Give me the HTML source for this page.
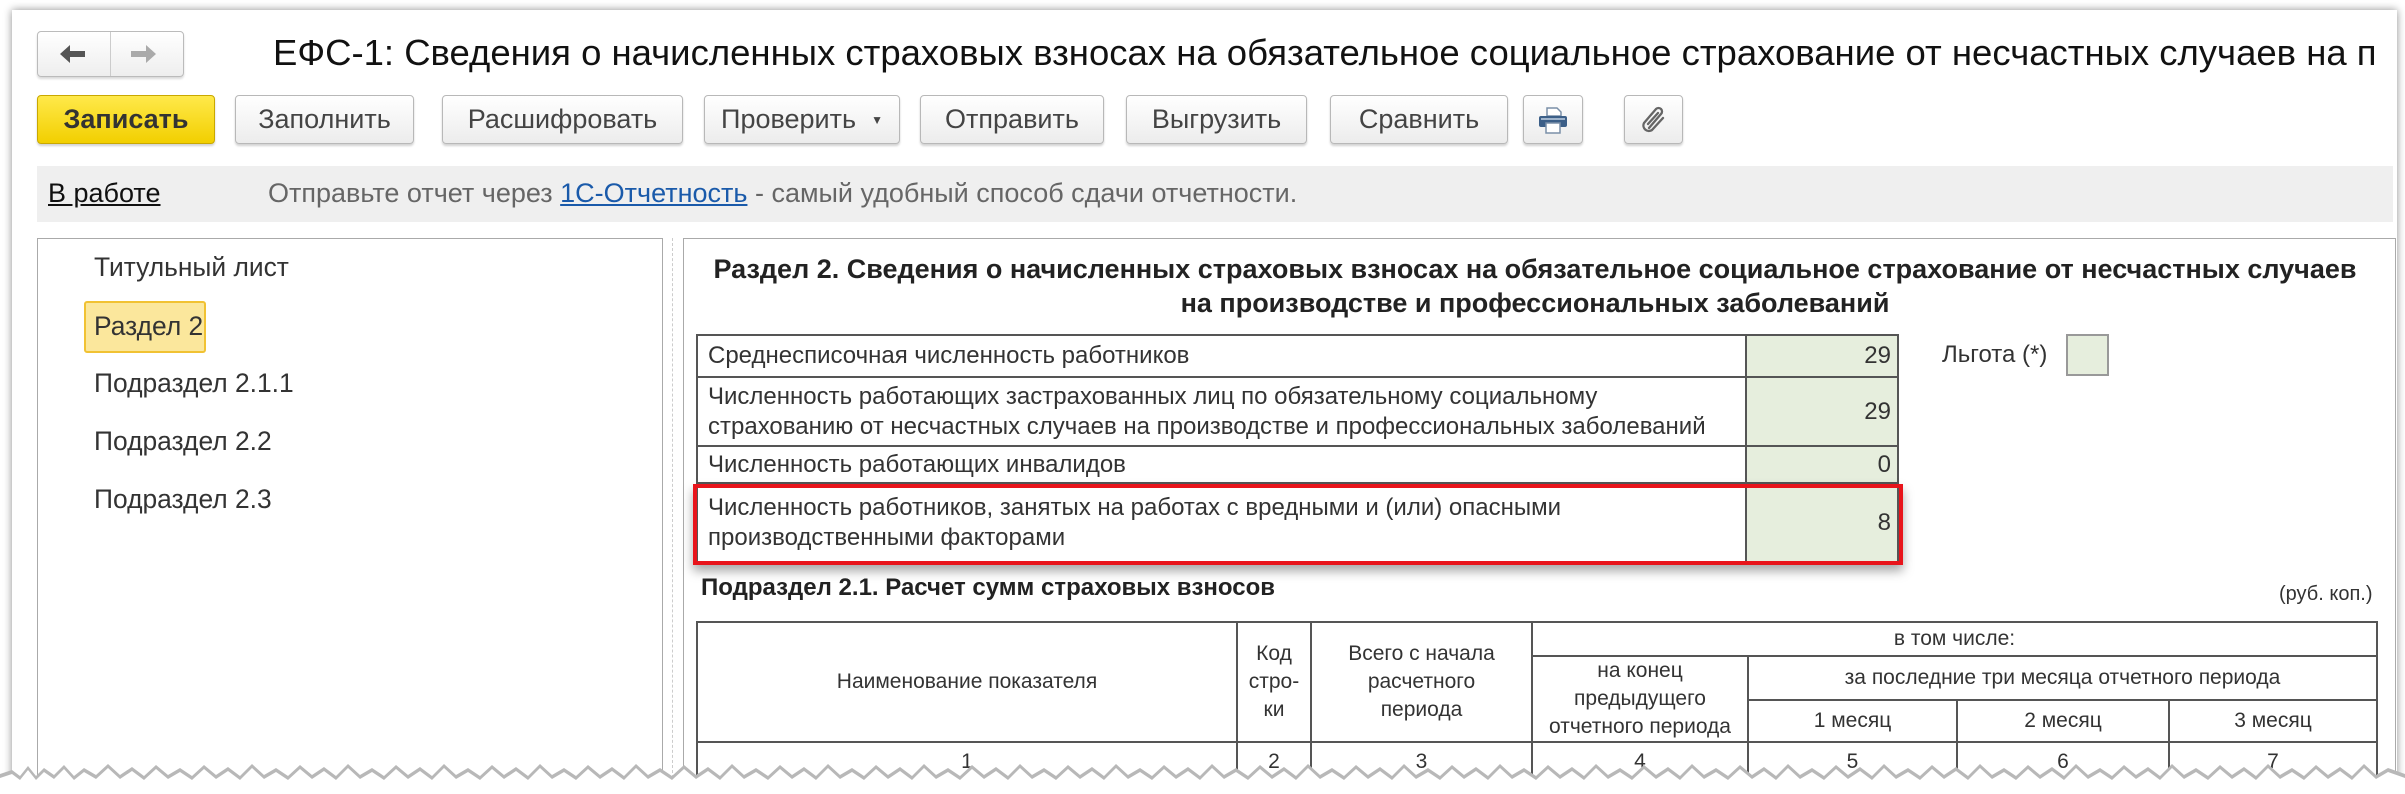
<!DOCTYPE html>
<html><head><meta charset="utf-8"><style>
*{box-sizing:border-box;margin:0;padding:0}
body{width:2405px;height:794px;background:#fff;position:relative;overflow:hidden;font-family:"Liberation Sans",Arial,sans-serif;color:#333}
.win{position:absolute;left:12px;top:10px;width:2385px;height:770px;background:#fff;box-shadow:0 0 8px rgba(0,0,0,.45)}
.a{position:absolute}
.btn{position:absolute;top:95px;height:49px;border:1px solid #b8b8b8;border-radius:4px;background:linear-gradient(#fff,#ececec);box-shadow:0 2px 2px rgba(0,0,0,.18);font-size:27px;color:#444;display:flex;align-items:center;justify-content:center;white-space:nowrap}
.t1{position:absolute;border-collapse:collapse;font-size:24px;color:#333}
.t1 td{border:2px solid #555;padding:0 10px;line-height:30px}
.t1 td.v{background:#e6eedd;text-align:right;padding-right:6px}
.t2{position:absolute;border-collapse:collapse;font-size:21px;color:#333;text-align:center}
.t2 td{border:2px solid #555;line-height:28px}
.li{position:absolute;left:94px;font-size:26.4px;color:#333}
</style></head><body>
<div class="win"></div>
<div class="a" style="left:37px;top:31px;width:147px;height:46px;border:1px solid #bbb;border-radius:4px;background:linear-gradient(#fff,#eee);box-shadow:0 2px 2px rgba(0,0,0,.15)"></div>
<div class="a" style="left:110px;top:32px;width:1px;height:44px;background:#ccc"></div>
<svg class="a" style="left:58px;top:42px" width="30" height="24"><path d="M2 12 L12 3 V9 H27 V15 H12 V21 Z" fill="#555"/></svg>
<svg class="a" style="left:128px;top:42px" width="30" height="24"><path d="M28 12 L18 3 V9 H3 V15 H18 V21 Z" fill="#aaa"/></svg>
<div class="a" style="left:273px;top:32px;font-size:36.5px;color:#111;white-space:nowrap">ЕФС-1: Сведения о начисленных страховых взносах на обязательное социальное страхование от несчастных случаев на п</div>
<div class="btn" style="left:37px;width:178px;background:linear-gradient(#ffe94a,#f2cf00);border-color:#c9a800;font-weight:bold;color:#333">Записать</div>
<div class="btn" style="left:235px;width:179px">Заполнить</div>
<div class="btn" style="left:442px;width:241px">Расшифровать</div>
<div class="btn" style="left:704px;width:196px">Проверить&nbsp;&nbsp;<span style="font-size:12px">▼</span></div>
<div class="btn" style="left:920px;width:184px">Отправить</div>
<div class="btn" style="left:1126px;width:181px">Выгрузить</div>
<div class="btn" style="left:1330px;width:178px">Сравнить</div>
<div class="btn" style="left:1523px;width:60px"><svg width="30" height="28"><path d="M9 2 H19 L23 6 V10 H9 Z" fill="#fff" stroke="#7a8fa8" stroke-width="1.5"/><rect x="1" y="10" width="28" height="11" rx="2" fill="#3c5f88"/><rect x="3" y="12" width="24" height="2" fill="#9fb4cc"/><rect x="8" y="17" width="14" height="10" fill="#fff" stroke="#7a8fa8" stroke-width="1.5"/></svg></div>
<div class="btn" style="left:1624px;width:59px"><svg width="28" height="28"><path d="M9 22 L21 8 A3.5 3.5 0 0 0 16 3 L4 17 A5.5 5.5 0 0 0 12 24 L23 12 M8 18 L18 7" fill="none" stroke="#666" stroke-width="2.3" stroke-linecap="round"/></svg></div>
<div class="a" style="left:37px;top:166px;width:2356px;height:56px;background:#efefef"></div>
<div class="a" style="left:48px;top:178px;font-size:27px;color:#111;text-decoration:underline">В работе</div>
<div class="a" style="left:268px;top:178px;font-size:27px;color:#666;white-space:nowrap">Отправьте отчет через <span style="color:#1a5aaa;text-decoration:underline">1С-Отчетность</span> - самый удобный способ сдачи отчетности.</div>
<div class="a" style="left:37px;top:238px;width:626px;height:540px;border:1px solid #aaa;border-bottom:none"></div>
<div class="a" style="left:672px;top:238px;width:0;height:540px;border-left:1px dashed #ccc"></div>
<div class="li" style="top:252px">Титульный лист</div>
<div class="a" style="left:84px;top:301px;width:122px;height:52px;background:#fbe79c;border:2px solid #f1c233;border-radius:3px"></div>
<div class="li" style="top:311px">Раздел 2</div>
<div class="li" style="top:368px">Подраздел 2.1.1</div>
<div class="li" style="top:426px">Подраздел 2.2</div>
<div class="li" style="top:484px">Подраздел 2.3</div>
<div class="a" style="left:683px;top:238px;width:1713px;height:540px;border:1px solid #aaa;border-bottom:none"></div>
<div class="a" style="left:690px;top:252px;width:1690px;text-align:center;font-size:27px;font-weight:bold;color:#222;line-height:34px;white-space:nowrap">Раздел 2. Сведения о начисленных страховых взносах на обязательное социальное страхование от несчастных случаев<br>на производстве и профессиональных заболеваний</div>
<table class="t1" style="left:696px;top:334px;width:1203px">
<tr style="height:42px"><td>Среднесписочная численность работников</td><td class="v" style="width:152px">29</td></tr>
<tr style="height:69px"><td>Численность работающих застрахованных лиц по обязательному социальному<br>страхованию от несчастных случаев на производстве и профессиональных заболеваний</td><td class="v">29</td></tr>
<tr style="height:37px"><td>Численность работающих инвалидов</td><td class="v">0</td></tr>
<tr style="height:79px"><td>Численность работников, занятых на работах с вредными и (или) опасными<br>производственными факторами</td><td class="v">8</td></tr>
</table>
<div class="a" style="left:693px;top:484px;width:1210px;height:81px;border:4px solid #e8141b;box-shadow:0 6px 10px rgba(0,0,0,.35)"></div>
<div class="a" style="left:1942px;top:341px;font-size:24px;color:#333">Льгота (*)</div>
<div class="a" style="left:2066px;top:334px;width:43px;height:42px;background:#e6eedd;border:2px solid #999"></div>
<div class="a" style="left:701px;top:574px;font-size:24px;font-weight:bold;color:#222">Подраздел 2.1. Расчет сумм страховых взносов</div>
<div class="a" style="left:2279px;top:583px;font-size:20px;color:#333">(руб. коп.)</div>
<table class="t2" style="left:696px;top:621px;width:1682px">
<tr style="height:34px"><td rowspan="3" style="width:540px">Наименование показателя</td><td rowspan="3" style="width:74px">Код<br>стро-<br>ки</td><td rowspan="3" style="width:221px">Всего с начала<br>расчетного<br>периода</td><td colspan="4">в том числе:</td></tr>
<tr style="height:43px"><td rowspan="2" style="width:216px">на конец<br>предыдущего<br>отчетного периода</td><td colspan="3">за последние три месяца отчетного периода</td></tr>
<tr style="height:41px"><td style="width:209px">1 месяц</td><td style="width:212px">2 месяц</td><td>3 месяц</td></tr>
<tr style="height:40px"><td>1</td><td>2</td><td>3</td><td>4</td><td>5</td><td>6</td><td>7</td></tr>
</table>
<svg class="a" style="left:0;top:755px;z-index:10" width="2405" height="39" viewBox="0 0 2405 39">
<path transform="translate(0,5)" fill="#b8b8b8" d="M0 39 V14 L12 10 L20 16 L28 6 L36 16 L44 8 L54 15 L64 5 L74 16 L84 8 L96 15 L108 4 L120 15 L132 7 L144 16 L156 5 L168 15 L180 8 L192 16 L204 5 L216 15 L228 7 L240 16 L252 4 L264 15 L276 8 L288 16 L300 5 L312 15 L324 7 L336 16 L348 4 L360 15 L372 8 L384 16 L396 5 L408 15 L420 7 L432 16 L444 4 L456 15 L468 8 L480 16 L492 5 L504 15 L516 7 L528 16 L540 4 L552 15 L564 8 L576 16 L588 5 L600 15 L612 7 L624 16 L636 4 L648 15 L660 8 L672 16 L684 5 L696 15 L708 7 L720 16 L732 4 L744 15 L756 8 L768 16 L780 5 L792 15 L804 7 L816 16 L828 4 L840 15 L852 8 L864 16 L876 5 L888 15 L900 7 L912 16 L924 4 L936 15 L948 8 L960 16 L972 5 L984 15 L996 7 L1008 16 L1020 4 L1032 15 L1044 8 L1056 16 L1068 5 L1080 15 L1092 7 L1104 16 L1116 4 L1128 15 L1140 8 L1152 16 L1164 5 L1176 15 L1188 7 L1200 16 L1212 4 L1224 15 L1236 8 L1248 16 L1260 5 L1272 15 L1284 7 L1296 16 L1308 4 L1320 15 L1332 8 L1344 16 L1356 5 L1368 15 L1380 7 L1392 16 L1404 4 L1416 15 L1428 8 L1440 16 L1452 5 L1464 15 L1476 7 L1488 16 L1500 4 L1512 15 L1524 8 L1536 16 L1548 5 L1560 15 L1572 7 L1584 16 L1596 4 L1608 15 L1620 8 L1632 16 L1644 5 L1656 15 L1668 7 L1680 16 L1692 4 L1704 15 L1716 8 L1728 16 L1740 5 L1752 15 L1764 7 L1776 16 L1788 4 L1800 15 L1812 8 L1824 16 L1836 5 L1848 15 L1860 7 L1872 16 L1884 4 L1896 15 L1908 8 L1920 16 L1932 5 L1944 15 L1956 7 L1968 16 L1980 4 L1992 15 L2004 8 L2016 16 L2028 5 L2040 15 L2052 7 L2064 16 L2076 4 L2088 15 L2100 8 L2112 16 L2124 5 L2136 15 L2148 7 L2160 16 L2172 4 L2184 15 L2196 8 L2208 16 L2220 5 L2232 15 L2244 7 L2256 16 L2268 4 L2280 15 L2292 8 L2304 16 L2316 5 L2328 15 L2340 7 L2352 16 L2364 4 L2376 15 L2388 8 L2405 14 V39 Z"/>
<path transform="translate(0,9)" fill="#ffffff" d="M0 39 V14 L12 10 L20 16 L28 6 L36 16 L44 8 L54 15 L64 5 L74 16 L84 8 L96 15 L108 4 L120 15 L132 7 L144 16 L156 5 L168 15 L180 8 L192 16 L204 5 L216 15 L228 7 L240 16 L252 4 L264 15 L276 8 L288 16 L300 5 L312 15 L324 7 L336 16 L348 4 L360 15 L372 8 L384 16 L396 5 L408 15 L420 7 L432 16 L444 4 L456 15 L468 8 L480 16 L492 5 L504 15 L516 7 L528 16 L540 4 L552 15 L564 8 L576 16 L588 5 L600 15 L612 7 L624 16 L636 4 L648 15 L660 8 L672 16 L684 5 L696 15 L708 7 L720 16 L732 4 L744 15 L756 8 L768 16 L780 5 L792 15 L804 7 L816 16 L828 4 L840 15 L852 8 L864 16 L876 5 L888 15 L900 7 L912 16 L924 4 L936 15 L948 8 L960 16 L972 5 L984 15 L996 7 L1008 16 L1020 4 L1032 15 L1044 8 L1056 16 L1068 5 L1080 15 L1092 7 L1104 16 L1116 4 L1128 15 L1140 8 L1152 16 L1164 5 L1176 15 L1188 7 L1200 16 L1212 4 L1224 15 L1236 8 L1248 16 L1260 5 L1272 15 L1284 7 L1296 16 L1308 4 L1320 15 L1332 8 L1344 16 L1356 5 L1368 15 L1380 7 L1392 16 L1404 4 L1416 15 L1428 8 L1440 16 L1452 5 L1464 15 L1476 7 L1488 16 L1500 4 L1512 15 L1524 8 L1536 16 L1548 5 L1560 15 L1572 7 L1584 16 L1596 4 L1608 15 L1620 8 L1632 16 L1644 5 L1656 15 L1668 7 L1680 16 L1692 4 L1704 15 L1716 8 L1728 16 L1740 5 L1752 15 L1764 7 L1776 16 L1788 4 L1800 15 L1812 8 L1824 16 L1836 5 L1848 15 L1860 7 L1872 16 L1884 4 L1896 15 L1908 8 L1920 16 L1932 5 L1944 15 L1956 7 L1968 16 L1980 4 L1992 15 L2004 8 L2016 16 L2028 5 L2040 15 L2052 7 L2064 16 L2076 4 L2088 15 L2100 8 L2112 16 L2124 5 L2136 15 L2148 7 L2160 16 L2172 4 L2184 15 L2196 8 L2208 16 L2220 5 L2232 15 L2244 7 L2256 16 L2268 4 L2280 15 L2292 8 L2304 16 L2316 5 L2328 15 L2340 7 L2352 16 L2364 4 L2376 15 L2388 8 L2405 14 V39 Z"/>
<rect x="0" y="30" width="2405" height="9" fill="#fff"/>
</svg>
</body></html>
